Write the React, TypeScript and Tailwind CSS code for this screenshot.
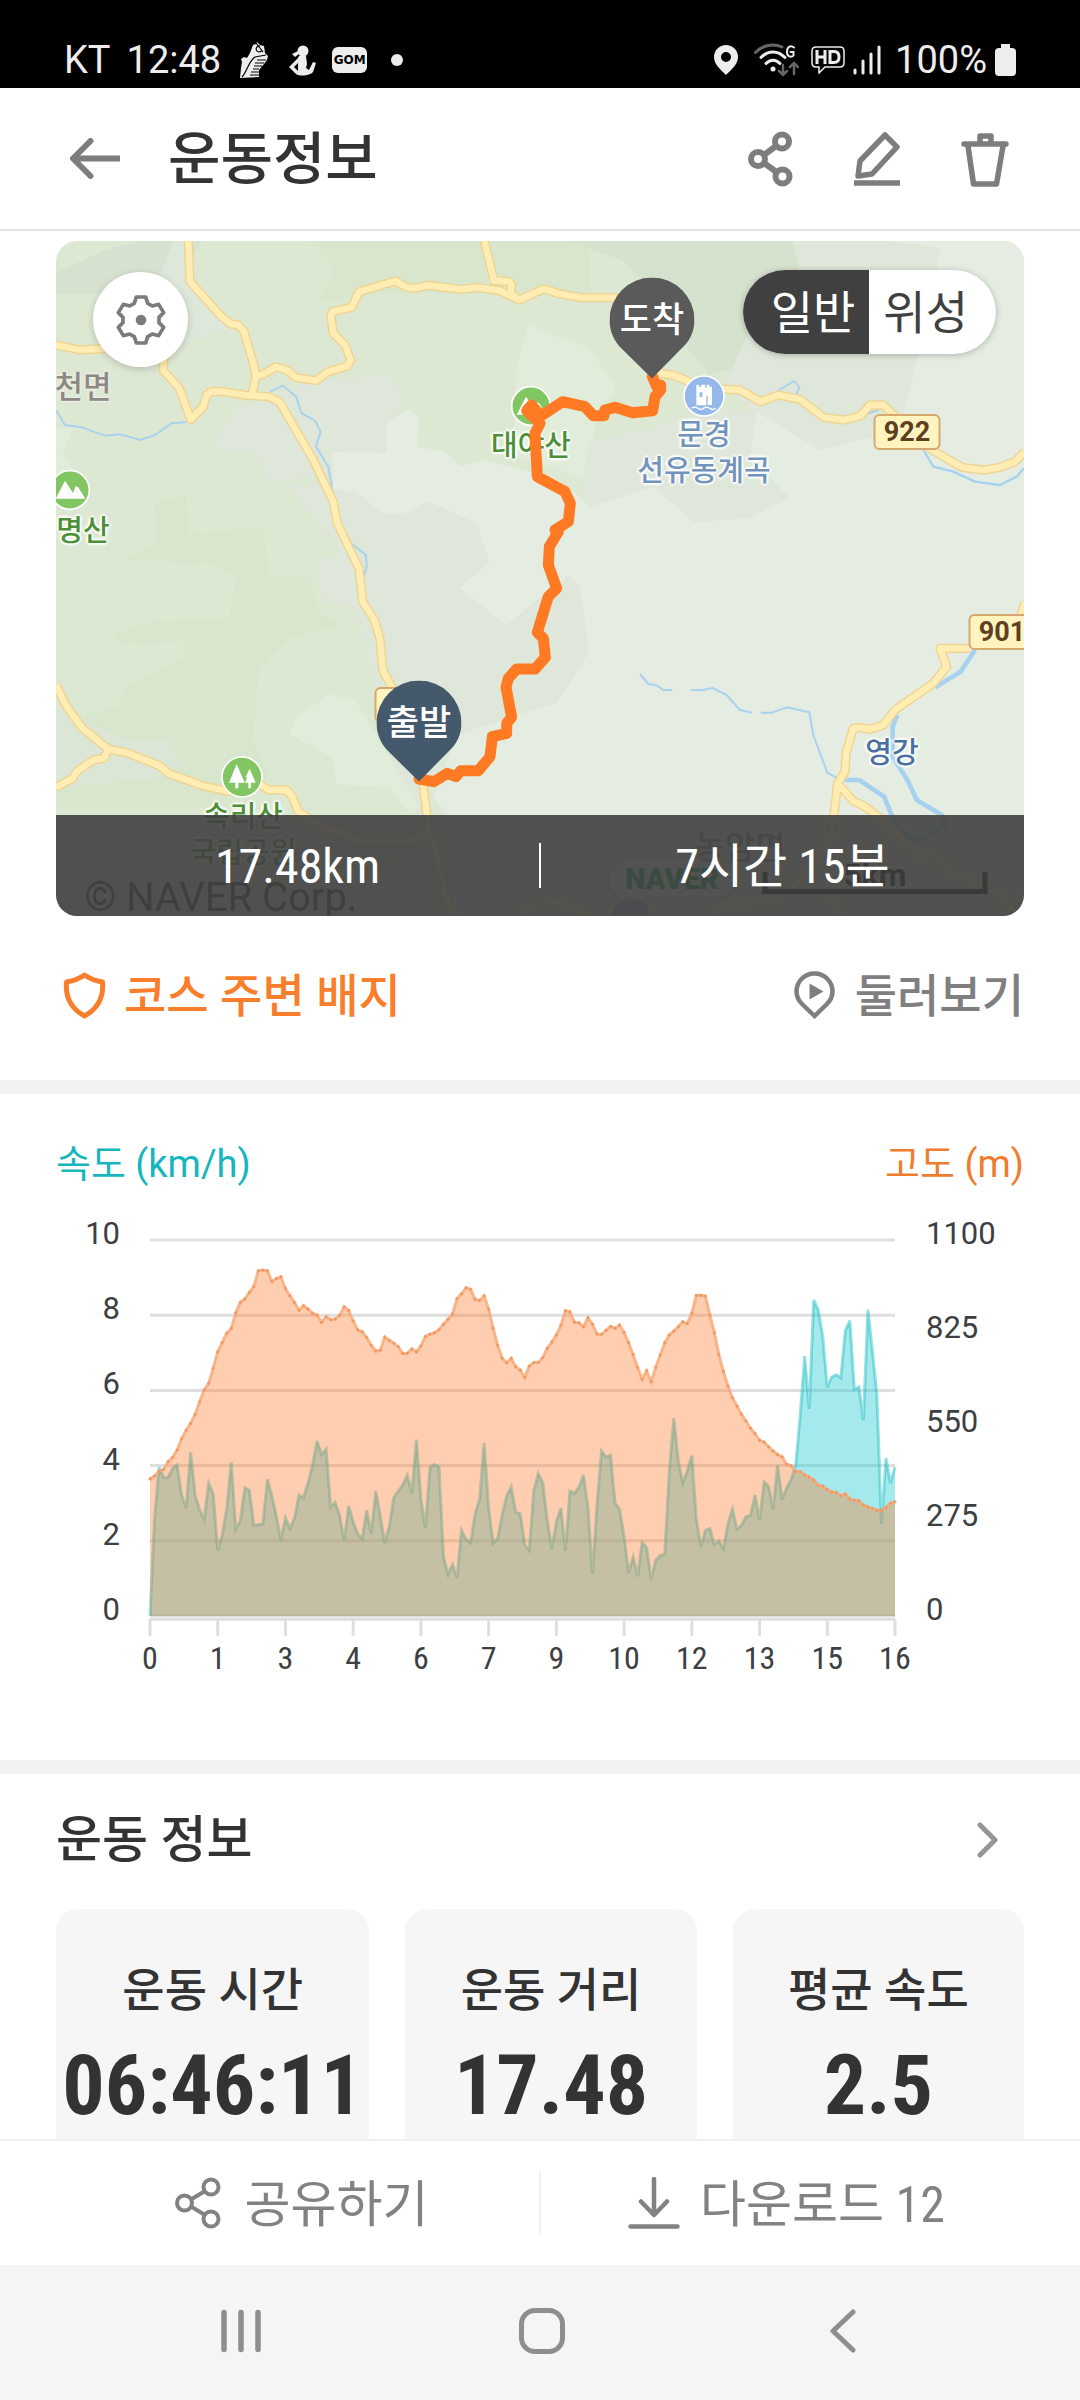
import type { ReactNode } from "react";

const MAP_W = 968;
const MAP_H = 675;

// Terrain, roads and rivers use a 2904x2025 grid (3 units per map pixel)
const terrain = [
  { fill: "#d6e2cf", d: "M0 0H440L350 130L300 160H0ZM0 95L140 30L240 0H0Z" },
  { fill: "#dee8da", d: "M350 0L400 0L440 200L520 260L330 330L300 140Z" },
  { fill: "#d8e6cd", d: "M760 0H1600V170L1020 150L790 180L840 90Z" },
  { fill: "#d5e2cd", d: "M1540 0H2220L2290 150L2080 270L2040 380L1960 400L1900 330L1760 120L1700 60Z" },
  { fill: "#dee7d9", d: "M2210 0H2500L2652 22L2642 87L2577 387L2532 567L2292 627L2102 512L2000 440L2080 270L2240 130Z" },
  { fill: "#e1edda", d: "M1420 250L1512 290L1600 320L1680 440L1620 540L1590 720L1512 687L1372 640L1380 380Z" },
  { fill: "#dee7d9", d: "M540 500L780 420L1000 400L1050 480L992 547L992 637L827 632L860 700L640 720L600 640L470 620Z" },
  { fill: "#e0edd9", d: "M0 560L50 560L20 640L60 700L0 720Z" },
  { fill: "#d8e6cd", d: "M295 790L390 757L395 880L620 855L640 1000L760 1010L790 1120L860 1150L700 1190L610 1290L590 1500L640 1600L560 1700H0V1440L180 1400L220 1330L320 1280L390 1250L380 1200L200 1210L170 1180L290 1140L520 1130L540 1010L480 970L210 955L300 900Z" },
  { fill: "#dce6d7", d: "M0 1330L60 1420L210 1500L330 1500L380 1570L300 1610L0 1640Z" },
  { fill: "#dee7d9", d: "M690 730L800 740L832 747L897 752L982 817L1042 817L1117 782L1262 847L1302 962L1210 1042L1352 1152L1402 1120L1537 1002L1572 1037L1577 1077L1600 1232L1502 1387L1432 1407L1202 1482L1082 1717L1000 1540L950 1300L900 1100L800 1080L780 960L860 930Z" },
  { fill: "#e5ede2", d: "M827 632L992 637L992 547L1062 502L1092 537L1082 617L1167 632L1212 677L1282 657L1372 680L1512 720L1572 767L1602 797L1792 737L1912 842L2072 832L2202 772L2082 647L2102 512L2292 627L2532 567L2577 387L2642 87L2652 22L2502 0H2904V2025H1192L1202 1767L1132 1667L1202 1482L1432 1407L1502 1387L1600 1232L1577 1077L1572 1037L1537 1002L1352 1152L1210 1042L1302 962L1262 847L1117 782L1042 817L982 817L897 752L832 747Z" },
  { fill: "#dee7d9", d: "M1790 560L1950 500L2102 512L2082 647L2202 772L2072 832L1912 842L1792 737L1602 797L1572 767L1600 600Z" },
  { fill: "#e1eddb", d: "M820 1360L900 1380L1090 1700L1060 1717L1000 1640L840 1630L830 1550L700 1480L720 1430Z" },
  { fill: "#dee7d9", d: "M1150 1680L1190 1740L1210 1880L1150 2025H1220L1240 1900L1200 1780Z" },
];

const roads = [
  "397,0 402,122 492,222 524,249 547,252 564,272 592,367 600,402 588,462",
  "0,312 72,327 152,322",
  "324,330 322,389 370,442 404,535 442,497 452,462 467,452 497,451 572,463 637,467 670,482 772,657 832,782 844,847 909,982 920,1082 955,1137 972,1192 980,1287 1012,1347 1080,1500 1102,1637 1112,1717 1117,1767 1137,1817 1167,1957 1192,2024",
  "600,402 620,401 660,377 697,389 717,409 780,419 817,392 874,375 884,357 867,312 832,277 824,222 832,211 887,199 909,152 1019,120 1047,137 1072,142 1117,133 1217,145 1262,139 1332,149 1389,177 1464,143 1512,159 1577,170 1692,170 1740,300 1817,399 1852,402 1892,419 1942,442 2052,447 2114,482 2167,462 2232,475 2302,529 2364,537 2412,525 2442,492 2482,492 2522,532 2612,617 2717,679 2782,687 2832,679 2877,662 2907,632",
  "1285,0 1314,119 1360,122 1367,132 1364,157 1389,177",
  "0,1332 32,1397 77,1459 157,1525 212,1535 312,1575 337,1597 442,1635 522,1652 602,1622 637,1647 692,1647 709,1667 727,1712 812,1767 832,1762 902,1799 1062,1799 1122,1777",
  "157,1525 144,1552 112,1557 62,1592 50,1612 0,1639",
  "2742,1222 2652,1222 2672,1277 2632,1327 2517,1407 2482,1452 2442,1465 2412,1459 2392,1462 2370,1537 2367,1592 2345,1627 2334,1722 2322,1800 2280,1870 2202,1947 2152,1982 2002,1987 1972,2025",
  "2345,1627 2392,1680 2427,1697 2467,1727 2592,1847 2632,1842 2692,1897 2832,1957 2882,2022",
  "2322,1947 2352,2025",
  "1395,2025 1420,1995 1500,1980 1560,2010 1600,2025",
  "2907,1085 2892,1130",
];

const streams = [
  "0,507 27,552 77,559 147,584 192,580 254,597 297,582 347,547 392,543",
  "572,474 600,472",
  "642,452 682,434 720,467 737,517 777,539 794,572 780,617 817,677 830,752",
  "867,872 887,909 930,942 932,977 925,1002",
  "2167,449 2214,420 2230,437 2222,459",
  "2432,519 2467,507",
  "1752,1299 1777,1329 1802,1333 1822,1347 1849,1347",
  "1904,1347 1940,1347 1970,1341 2012,1362 2052,1407 2089,1415",
  "2114,1415 2147,1415 2194,1399 2260,1414 2272,1482 2314,1595 2345,1612",
];

const rivers = [
  "2602,627 2632,677 2692,692 2757,722 2832,732 2882,707 2904,682",
  "2757,1227 2714,1292 2637,1339",
  "2524,1422 2510,1457 2510,1547 2557,1622 2582,1677 2657,1722 2667,1757 2582,1802 2532,1767 2507,1722 2484,1667 2410,1617 2367,1617",
];

const track =
  "1789,407 1802,437 1814,432 1814,447 1797,467 1790,509 1730,515 1677,499 1647,507 1644,524 1612,524 1587,497 1520,482 1455,525 1427,492 1412,509 1452,547 1437,577 1444,707 1527,752 1543,787 1537,842 1497,867 1507,872 1480,917 1477,972 1502,1042 1477,1067 1444,1174 1462,1192 1468,1249 1437,1284 1382,1284 1357,1312 1350,1339 1367,1429 1352,1447 1352,1477 1309,1487 1302,1547 1267,1589 1214,1589 1200,1607 1174,1597 1134,1622 1089,1614";

// y offsets of each sample on the plot grid, 309 is the top line and 1362 the zero line
const PLOT_TOP = 309;
const PLOT_ZERO = 1362;

const elevation = [
  978, 970, 957, 952, 930, 918, 897, 865, 842, 822, 797, 762, 729, 710, 668, 622, 596, 570, 557, 513, 483, 474, 456, 439,
  395, 393, 395, 425, 417, 412, 445, 465, 484, 505, 493, 502, 514, 519, 539, 524, 532, 530, 520, 496, 506, 536, 560, 566,
  582, 604, 620, 618, 581, 590, 598, 608, 627, 626, 614, 622, 606, 579, 573, 569, 560, 545, 531, 516, 473, 460, 443, 447,
  475, 478, 465, 503, 556, 604, 640, 653, 640, 664, 673, 694, 662, 652, 652, 638, 612, 595, 575, 548, 507, 510, 539, 541,
  552, 527, 545, 572, 573, 562, 551, 556, 547, 568, 596, 630, 666, 699, 675, 706, 666, 631, 597, 575, 564, 552, 538, 543,
  514, 464, 464, 466, 519, 569, 630, 677, 718, 751, 774, 797, 816, 836, 851, 870, 875, 888, 900, 910, 916, 937, 941, 957,
  957, 967, 973, 981, 996, 998, 1008, 1015, 1016, 1025, 1020, 1034, 1038, 1039, 1051, 1057, 1060, 1066, 1065, 1058, 1046,
  1042,
];

const speed = [
  1362, 1090, 945, 974, 974, 949, 939, 1023, 1060, 904, 1023, 1065, 1091, 990, 1020, 1178, 1135, 1060, 932, 1119, 1095,
  1003, 1010, 1109, 1106, 1104, 979, 1026, 1083, 1150, 1087, 1117, 1088, 1023, 1031, 990, 940, 872, 910, 895, 1057, 1044,
  1080, 1150, 1054, 1098, 1132, 1145, 1066, 1132, 1012, 1082, 1158, 1110, 1030, 1012, 995, 968, 1020, 868, 1035, 1115, 946,
  938, 945, 1197, 1245, 1218, 1255, 1122, 1148, 1157, 1076, 1035, 878, 1058, 1158, 1145, 1078, 1025, 1000, 1071, 1076,
  1163, 1178, 1010, 963, 990, 1095, 1174, 1098, 1060, 1180, 1012, 1018, 1002, 967, 1060, 1244, 1050, 900, 917, 912, 1045,
  1063, 1140, 1241, 1197, 1251, 1156, 1171, 1259, 1206, 1193, 1189, 960, 808, 925, 990, 955, 913, 1090, 1168, 1122, 1117,
  1162, 1152, 1174, 1104, 1062, 1119, 1108, 1084, 1080, 1023, 1093, 987, 999, 1062, 940, 1036, 1003, 980, 940, 800, 634,
  782, 477, 505, 580, 722, 692, 686, 695, 563, 535, 727, 720, 814, 504, 620, 745, 1104, 920, 990, 945,
];

const speedTicks = ["10", "8", "6", "4", "2", "0"];
const elevationTicks = ["1100", "825", "550", "275", "0"];
const distanceTicks = ["0", "1", "3", "4", "6", "7", "9", "10", "12", "13", "15", "16"];

const stats = [
  { label: "운동 시간", value: "06:46:11" },
  { label: "운동 거리", value: "17.48" },
  { label: "평균 속도", value: "2.5" },
];

const toLine = (values: number[]) => values.map((y, x) => `${x},${y}`).join(" ");
const toArea = (values: number[]) => `0,${PLOT_ZERO} ${toLine(values)} ${values.length - 1},${PLOT_ZERO}`;

function StatusBar() {
  return (
    <div className="flex h-[88px] shrink-0 items-end justify-between bg-black pr-16 pb-1.5 pl-16 text-[38px] leading-[40px] text-[#ededed]">
      <div className="flex h-11 items-center">
        <span>KT</span>
        <span className="ml-4">12:48</span>
        <svg className="ml-[18px] h-[37px] w-[30px]" viewBox="0 0 30 37">
          <path d="M1 36L2 26L3 20L2 17L5 15L8 16L11 11L14 3L17 2L18 0L21 3L25 4L26 11L29 14L28 18L25 22L20 28L20 35Z" fill="#ededed" />
          <path d="M3 35C8 30 9 20 16 15L27 13M17 1L24 10M21 4a3 3 0 1 0 2 4M18 18h9M16 21h9M15 24h8M14 27h6M12 30h8M11 33h9" fill="none" stroke="#000" strokeWidth="1.2" />
        </svg>
        <svg className="ml-5 h-[31px] w-[27px]" viewBox="0 0 27 31" fill="#ededed">
          <circle cx="14" cy="6" r="5.5" />
          <path d="M3 9L9 6L11 8L6 12Z" />
          <path d="M10 11L17 11L18 19L17 23L20 25L24 17L27 18L24 27C21 31 9 32 6 28L0 22L9 13ZM5 22L9 26L9 18Z" fillRule="evenodd" />
        </svg>
        <span className="ml-4 flex h-[26px] w-[35px] items-center justify-center rounded-md bg-[#ededed] font-['DejaVu_Sans',sans-serif] text-[12px] font-bold text-black">
          GOM
        </span>
        <span className="ml-6 size-3 rounded-full bg-[#ededed]" />
      </div>
      <div className="flex h-11 items-center">
        <svg className="h-[30px] w-6" viewBox="0 0 24 30" fill="#ededed">
          <path fillRule="evenodd" d="M12 0a12 12 0 0 1 12 12c0 7-6 12-12 18C6 24 0 19 0 12A12 12 0 0 1 12 0Zm0 7a5 5 0 1 0 0 10a5 5 0 0 0 0-10Z" />
        </svg>
        <svg className="ml-4 h-[34px] w-[45px]" viewBox="0 0 45 34" fill="none" strokeLinecap="round">
          <path d="M1.500 9.500C9 2 19 0 28 4" stroke="#666" strokeWidth="3" />
          <path d="M7 14.500C14 7 24 7 31 14.500M12 20.500C16 16 22 16 26 20.500" stroke="#ededed" strokeWidth="3" />
          <circle cx="19" cy="26" r="2.500" fill="#ededed" />
          <path d="M40 4.500C37 2 33 3 33 9C33 14 37 14.500 39.500 12.500V9H36.500" stroke="#ededed" strokeWidth="2" />
          <path d="M29 22v10M25 28l4 4l4-4M40 31V20M36 24l4-4l4 4" stroke="#666" strokeWidth="2.500" />
        </svg>
        <svg className="ml-3 h-[28px] w-[34px]" viewBox="0 0 34 28" fill="none" stroke="#ededed">
          <path d="M5 1H29Q33 1 33 5V17Q33 21 29 21H14L8 27V21H5Q1 21 1 17V5Q1 1 5 1Z" strokeWidth="1.500" />
          <path d="M6 4v14M14 4v14M6 11h8M19 5.500h4q5 0 5 5.500t-5 5.500h-4Z" strokeWidth="3" />
        </svg>
        <svg className="ml-2 h-[30px] w-7" viewBox="0 0 28 30" stroke="#ededed" strokeWidth="3" strokeLinecap="round">
          <path d="M2 25v3M10 16v12M18 9v19M26 2v26" />
        </svg>
        <span className="ml-[14px]">100%</span>
        <svg className="ml-2 h-8 w-[21px]" viewBox="0 0 21 32" fill="#ededed">
          <path d="M6 0h9v4h2q4 0 4 4v20q0 4-4 4H4q-4 0-4-4V8q0-4 4-4h2Z" />
        </svg>
      </div>
    </div>
  );
}

function Header() {
  return (
    <header className="flex h-[143px] shrink-0 items-center border-b-2 border-[#e2e2e2] pr-[71px] pl-[70px] text-[#7d7d7d]">
      <button type="button" aria-label="뒤로">
        <svg className="h-[41px] w-[50px]" viewBox="0 0 50 41" fill="none" stroke="currentColor" strokeWidth="6">
          <path d="M50 20.500H4" />
          <path d="M20.500 3L3 20.500L20.500 38" strokeLinecap="round" strokeLinejoin="round" />
        </svg>
      </button>
      <h1 className="ml-12 flex-1 pt-0.5 text-[57px] leading-[80px] font-medium text-[#333]">운동정보</h1>
      <div className="flex items-center gap-[61px]">
        <button type="button" aria-label="공유">
          <svg className="h-14 w-[45px]" viewBox="0 0 45 56" fill="none" stroke="currentColor" strokeWidth="6">
            <circle cx="34" cy="10.500" r="7" />
            <circle cx="10" cy="28" r="7" />
            <circle cx="34.500" cy="45.500" r="7" />
            <path d="M28 15L16 24M16 32L28.500 41" />
          </svg>
        </button>
        <button type="button" aria-label="수정">
          <svg className="h-14 w-[46px]" viewBox="0 0 46 56" fill="none" stroke="currentColor" strokeWidth="5.500" strokeLinejoin="round">
            <path d="M31 4L43 16L18 43L4 45L6 30Z" />
            <path d="M0 52h46" />
          </svg>
        </button>
        <button type="button" aria-label="삭제">
          <svg className="h-14 w-12" viewBox="0 0 48 56" fill="none" stroke="currentColor" strokeWidth="5.500" strokeLinecap="round" strokeLinejoin="round">
            <path d="M3 13h42M19 12V5h11v7M7 15l5.500 38h23L42 15" />
          </svg>
        </button>
      </div>
    </header>
  );
}

type SpotProps = { x: number; y: number; className?: string; children?: ReactNode };

// Anchors its content by the centre at a map position
function Spot({ x, y, className = "", children }: SpotProps) {
  return (
    <div
      className={`absolute -translate-1/2 text-center whitespace-nowrap ${className}`}
      style={{ left: `${(x / MAP_W) * 100}%`, top: `${(y / MAP_H) * 100}%` }}
    >
      {children}
    </div>
  );
}

const placeLabel =
  "text-[29px] leading-9 font-medium [text-shadow:2px_0_2px_#fff,-2px_0_2px_#fff,0_2px_2px_#fff,0_-2px_2px_#fff]";
const roadSign = "h-9 w-[67px] rounded-md border-2 border-[#d6a86f] bg-[#fff4c0] text-[27px] leading-8 font-bold text-[#5d401d]";

function MountainIcon() {
  return (
    <svg className="size-[42px]" viewBox="0 0 126 126">
      <circle cx="63" cy="63" r="58" fill="#82c563" stroke="#fff" strokeWidth="5" />
      <path d="M20 89L48 35L72 72L80 52L88 55L109 89Z" fill="#fff" />
    </svg>
  );
}

function Pin({ label, x, y, fill }: { label: string; x: number; y: number; fill: string }) {
  return (
    <Spot x={x} y={y} className="text-white">
      <svg className="h-[101px] w-[85px]" viewBox="0 0 85 101">
        <path d="M42.500 101L12 71C5 64 0 54 0 42.500a42.500 42.500 0 0 1 85 0C85 54 80 64 72 71Z" fill={fill} />
      </svg>
      <span className="absolute inset-x-0 top-[21px] text-[35px] leading-[44px] font-medium">{label}</span>
    </Spot>
  );
}

function CourseMap() {
  return (
    <div className="relative aspect-[968/675] overflow-hidden rounded-[21px] bg-[#dde8d3]">
      <svg className="absolute inset-0 size-full" viewBox="0 0 2904 2025" fill="none" strokeLinejoin="round">
        {terrain.map((area) => (
          <path key={area.d} d={area.d} fill={area.fill} />
        ))}
        {streams.map((points) => (
          <polyline key={points} points={points} stroke="#a9d2ee" strokeWidth="6" />
        ))}
        {rivers.map((points, i) => (
          <polyline key={points} points={points} stroke="#a6d2f0" strokeWidth={i === 0 ? 7 : 14} />
        ))}
        {roads.map((points) => (
          <polyline key={points} points={points} stroke="#efd594" strokeWidth="28" />
        ))}
        {roads.map((points) => (
          <polyline key={points} points={points} stroke="#ffedb3" strokeWidth="19" />
        ))}
      </svg>

      <Spot x={27} y={147} className="text-[31px] leading-9 font-medium text-[#8f8783] [text-shadow:0_0_3px_#fff]">
        천면
      </Spot>
      <Spot x={14} y={249}>
        <MountainIcon />
      </Spot>
      <Spot x={27} y={290} className={`${placeLabel} text-[#4b9036]`}>
        명산
      </Spot>
      <Spot x={475} y={165}>
        <MountainIcon />
      </Spot>
      <Spot x={475} y={205} className={`${placeLabel} text-[#4b9036]`}>
        대야산
      </Spot>
      <Spot x={648} y={155}>
        <svg className="size-[42px]" viewBox="0 0 126 126">
          <circle cx="63" cy="63" r="60" fill="#94b8ea" stroke="#fff" strokeWidth="5" />
          <path d="M40 29h8v6h7v-6h12v9h4v-9h8v6h8v55H74V62h-4v29H40ZM50 52v14h8V52Z" fill="#fff" fillRule="evenodd" />
          <path d="M26 100q9-7 18 0t18 0t18 0t18 0" stroke="#fff" strokeWidth="4" fill="none" />
        </svg>
      </Spot>
      <Spot x={648} y={212} className={`${placeLabel} text-[#7293bb]`}>
        문경
        <br />
        선유동계곡
      </Spot>
      <Spot x={836} y={512} className={`${placeLabel} text-[#4a6fa0]`}>
        영강
      </Spot>
      <Spot x={186} y={536}>
        <svg className="size-[42px]" viewBox="0 0 126 126">
          <circle cx="63" cy="63" r="60" fill="#82c563" stroke="#fff" strokeWidth="5" />
          <path d="M47 24L71 80H52V97H43V80H24ZM86 38L104 80H90V97H82V80H72L78 65L74 63Z" fill="#fff" />
        </svg>
      </Spot>
      <Spot x={187} y={594} className={`${placeLabel} text-[#4b9036]`}>
        속리산
        <br />
        국립공원
      </Spot>
      <Spot x={684} y={607} className="text-[33px] leading-9 font-medium text-[#8f8783]">
        농암면
      </Spot>
      <Spot x={851} y={191} className={roadSign}>
        922
      </Spot>
      <Spot x={946} y={391} className={roadSign}>
        901
      </Spot>
      <Spot x={352} y={464} className={roadSign} />
      <Spot x={575} y={676} className="size-[38px] rounded-full bg-[#5f86d0]/50" />
      <Spot x={616} y={638} className="h-[45px] w-[130px] rounded-full border-2 border-[#ccc] bg-white/20 font-['Roboto'] text-[29px] leading-10 font-black text-[#03a74a]">
        NAVER
      </Spot>
      <Spot x={819} y={634} className="font-['Roboto'] text-[32px] leading-9 font-bold text-black">
        5km
      </Spot>
      <Spot x={819} y={642} className="h-[22px] w-[225px] border-x-[5px] border-b-[5px] border-black" />
      <Spot x={165} y={657} className="text-[40px] leading-10 text-black/80">
        © NAVER Corp.
      </Spot>

      <svg className="absolute inset-0 size-full" viewBox="0 0 2904 2025" fill="none">
        <polyline points={track} stroke="#ff7a22" strokeWidth="33" strokeLinecap="round" strokeLinejoin="round" />
      </svg>

      <Pin label="도착" x={596} y={87} fill="#5a5a5a" />
      <Pin label="출발" x={363} y={490} fill="#45596c" />

      <button
        type="button"
        aria-label="설정"
        className="absolute top-[31px] left-[37px] flex size-[95px] items-center justify-center rounded-full bg-white shadow-[0_2px_6px_1px_rgba(0,0,0,0.15)]"
      >
        <svg className="size-[52px]" viewBox="224 191 156 156" fill="none" stroke="#7b7b7b" strokeWidth="11" strokeLinejoin="round">
          <path d="M288 200H316L322 219L336 227L355 222L370 247L356 261V277L370 291L355 316L336 311L322 319L316 338H288L282 319L268 311L249 316L234 291L248 277V261L234 247L249 222L268 227L282 219Z" />
          <circle cx="302" cy="269" r="16" fill="#7b7b7b" stroke="none" />
        </svg>
      </button>

      <div className="absolute top-[29px] right-7 flex h-[84px] overflow-hidden rounded-full bg-white text-[46px] leading-[86px] shadow-[0_1px_6px_rgba(0,0,0,0.25)]">
        <button type="button" aria-pressed="true" className="bg-[#404040] pr-[14px] pl-7 text-white">
          일반
        </button>
        <button type="button" aria-pressed="false" className="pr-7 pl-[14px] text-[#404040]">
          위성
        </button>
      </div>

      <div className="absolute inset-x-0 bottom-0 flex h-[101px] items-center bg-[#404040]/90 text-center font-['Roboto_Condensed','Roboto','Noto_Sans_CJK_KR',sans-serif] text-[48px] leading-[60px] text-white">
        <span className="flex-1 pt-0.5">17.48km</span>
        <span className="h-[45px] w-0.5 bg-white" />
        <span className="flex-1 pt-0.5">7시간 15분</span>
      </div>
    </div>
  );
}

function CourseLinks() {
  return (
    <div className="flex items-center justify-between pt-12 pb-[54px] text-[46px] leading-[60px] font-medium">
      <a href="#badges" className="flex items-center text-[#f97e2b]">
        <svg className="ml-[7px] h-12 w-[43px]" viewBox="0 0 43 48" fill="none" stroke="currentColor" strokeWidth="5" strokeLinejoin="round">
          <path d="M21.500 4C16 8 9 10 3.500 11C2 27 9 38 21.500 45C34 38 41 27 39.500 11C34 10 27 8 21.500 4Z" />
        </svg>
        <span className="ml-[18px] pt-0.5">코스 주변 배지</span>
      </a>
      <a href="#explore" className="flex items-center text-[#7f7f7f]">
        <svg className="h-12 w-[41px]" viewBox="0 0 41 48">
          <path d="M20.500 45L8 33C4.500 29.500 2.500 25.500 2.500 20.500a18 18 0 0 1 36 0C38.500 25.500 36.500 29.500 33 33Z" fill="none" stroke="currentColor" strokeWidth="4.500" />
          <path d="M15.500 12.500L29.500 20.500L15.500 28.500Z" fill="currentColor" />
        </svg>
        <span className="ml-5 pt-0.5">둘러보기</span>
      </a>
    </div>
  );
}

function Chart() {
  return (
    <section className="px-14 pt-[41px] pb-[82px]">
      <div className="flex justify-between text-[38px] leading-[58px]">
        <span className="text-[#17b5bd]">속도 (km/h)</span>
        <span className="text-[#ef7d2f]">고도 (m)</span>
      </div>
      <div className="mt-[22px] flex items-start text-[31px] leading-[38px] text-[#3c4043]">
        <div className="flex h-[414px] w-16 flex-col justify-between text-right">
          {speedTicks.map((tick) => (
            <span key={tick}>{tick}</span>
          ))}
        </div>
        <div className="ml-[30px] flex-1 pt-[25px]">
          <svg className="h-[376px] w-full overflow-visible" viewBox={`0 ${PLOT_TOP} 165 ${PLOT_ZERO - PLOT_TOP}`} preserveAspectRatio="none" fill="none">
            <g stroke="#dfdfdf" strokeWidth="3">
              {speedTicks.map((tick, i) => (
                <path key={tick} d={`M0 ${PLOT_TOP + i * 210.6}H165`} vectorEffect="non-scaling-stroke" />
              ))}
              <path d="M0 1371H165" vectorEffect="non-scaling-stroke" />
              {distanceTicks.map((tick, i) => (
                <path key={tick} d={`M${i * 15} 1371V1418`} vectorEffect="non-scaling-stroke" />
              ))}
            </g>
            <polygon points={toArea(speed)} fill="#1bc8cd" fillOpacity="0.4" />
            <polyline points={toLine(speed)} stroke="#1bbcc4" strokeOpacity="0.45" strokeWidth="3" vectorEffect="non-scaling-stroke" />
            <polygon points={toArea(elevation)} fill="#ff7a2a" fillOpacity="0.37" />
            <polyline points={toLine(elevation)} stroke="#f7a876" strokeOpacity="0.8" strokeWidth="3" vectorEffect="non-scaling-stroke" />
            <path
              d={elevation.map((y, x) => `M${x} ${y}h0`).join("")}
              stroke="#f0985f"
              strokeWidth="3"
              strokeLinecap="round"
              vectorEffect="non-scaling-stroke"
            />
          </svg>
          <div className="mt-[22px] flex justify-between font-['Roboto_Condensed','Roboto',sans-serif] text-[32px] leading-10">
            {distanceTicks.map((tick) => (
              <span key={tick} className="flex w-0 justify-center">
                {tick}
              </span>
            ))}
          </div>
        </div>
        <div className="flex h-[414px] w-[129px] flex-col justify-between pl-[31px]">
          {elevationTicks.map((tick) => (
            <span key={tick}>{tick}</span>
          ))}
        </div>
      </div>
    </section>
  );
}

function WorkoutInfo() {
  return (
    <section className="px-14 pt-[30px] text-[#333]">
      <div className="flex items-center justify-between">
        <h2 className="text-[50px] leading-[72px] font-medium">운동 정보</h2>
        <button type="button" aria-label="운동 정보 더보기" className="mr-[25px]">
          <svg className="h-9 w-[22px]" viewBox="0 0 22 36" fill="none" stroke="#969696" strokeWidth="5" strokeLinecap="round" strokeLinejoin="round">
            <path d="M3 3L18 18L3 33" />
          </svg>
        </button>
      </div>
      <div className="mt-[33px] grid grid-cols-[312fr_290fr_290fr] gap-9">
        {stats.map((stat) => (
          <div key={stat.label} className="rounded-[22px] bg-[#f6f6f6] pt-[51px] pb-12 text-center">
            <p className="text-[46px] leading-[60px] font-medium">{stat.label}</p>
            <p className="mt-[26px] font-['Roboto_Condensed','Roboto',sans-serif] text-[84px] leading-[80px] font-bold">{stat.value}</p>
          </div>
        ))}
      </div>
    </section>
  );
}

function BottomBar() {
  return (
    <div className="grid h-[126px] shrink-0 grid-cols-[1fr_2px_1fr] items-center border-t-2 border-[#efefef] bg-white font-['Roboto_Condensed','Roboto','Noto_Sans_CJK_KR',sans-serif] text-[50px] leading-[64px] text-[#828282]">
      <button type="button" className="flex items-center justify-center pl-16">
        <svg className="h-[52px] w-[46px]" viewBox="0 0 46 52" fill="none" stroke="currentColor" strokeWidth="4">
          <circle cx="36" cy="10" r="7.500" />
          <circle cx="9.500" cy="26" r="7.500" />
          <circle cx="36" cy="42" r="7.500" />
          <path d="M30 14L16 22.500M16 29.500L30 38" />
        </svg>
        <span className="ml-6 pt-1">공유하기</span>
      </button>
      <span className="h-16 bg-[#f0f0f0]" />
      <button type="button" className="flex items-center justify-center pr-12">
        <svg className="h-[52px] w-[52px]" viewBox="0 0 52 52" fill="none" stroke="currentColor" strokeWidth="4.500" strokeLinecap="round" strokeLinejoin="round">
          <path d="M26 2v35M13 24.500L26 38L39 24.500M2.500 49.500h47" />
        </svg>
        <span className="ml-5 pt-1">다운로드 12</span>
      </button>
    </div>
  );
}

function SystemNav() {
  return (
    <nav className="flex h-[135px] shrink-0 items-center justify-around bg-[#f5f5f5] pr-[87px] pb-1 pl-[91px] text-[#8e8e8e]">
      <button type="button" aria-label="최근 앱" className="flex w-12 justify-center">
        <svg className="h-11 w-10" viewBox="0 0 40 44" stroke="currentColor" strokeWidth="5.500" strokeLinecap="round">
          <path d="M3 3.500v37M20 3.500v37M37 3.500v37" />
        </svg>
      </button>
      <button type="button" aria-label="홈" className="flex w-12 justify-center">
        <span className="size-[46px] rounded-2xl border-[5px] border-current" />
      </button>
      <button type="button" aria-label="뒤로 가기" className="flex w-12 justify-center">
        <svg className="h-11 w-7" viewBox="0 0 28 44" fill="none" stroke="currentColor" strokeWidth="5" strokeLinecap="round" strokeLinejoin="round">
          <path d="M24 3L4 22L24 41" />
        </svg>
      </button>
    </nav>
  );
}

export default function App() {
  return (
    <div className="flex h-screen flex-col bg-white font-['Roboto','Noto_Sans_CJK_KR',sans-serif]">
      <StatusBar />
      <Header />
      <main className="min-h-0 flex-1 overflow-y-auto [scrollbar-width:none]">
        <div className="px-14 pt-[10px]">
          <CourseMap />
          <CourseLinks />
        </div>
        <div className="h-[14px] bg-[#f1f2f4]" />
        <Chart />
        <div className="h-[14px] bg-[#f1f2f4]" />
        <WorkoutInfo />
      </main>
      <BottomBar />
      <SystemNav />
    </div>
  );
}
